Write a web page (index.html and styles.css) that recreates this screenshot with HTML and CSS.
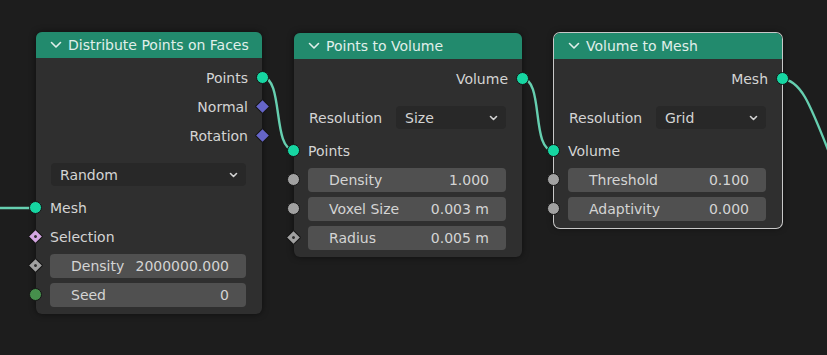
FILE: index.html
```html
<!DOCTYPE html>
<html lang="en">

<head>
    <meta charset="UTF-8">
    <meta name="viewport" content="width=device-width, initial-scale=1.0">
    <title>Geometry Nodes</title>
    <link rel="stylesheet" href="styles.css">
</head>

<body>
    <div class="canvas">
        <!-- links are drawn under the nodes -->
        <svg class="links" width="827" height="355" viewBox="0 0 827 355">
            <g class="link">
                <path d="M-10,208 L36,208" />
                <path d="M262,77 C284,77 272,150 294,150" />
                <path d="M521,78 C545,78 530,151 554,151" />
                <path d="M781,79 C803,79 812,110 838,175" />
            </g>
        </svg>

        <div class="node node-distribute">
            <div class="node-header">
                <svg class="collapse" width="12" height="8" viewBox="0 0 12 8"><polyline points="1.5,1.5 6,6 10.5,1.5" /></svg>
                <span>Distribute Points on Faces</span>
            </div>
            <div class="node-body">
                <div class="row output"><span class="label">Points</span><span class="socket geometry"></span></div>
                <div class="row output"><span class="label">Normal</span><span class="socket diamond vector"></span></div>
                <div class="row output"><span class="label">Rotation</span><span class="socket diamond vector"></span></div>
                <div class="row prop">
                    <div class="dropdown"><span>Random</span><svg class="chevron" width="9" height="6" viewBox="0 0 9 6"><polyline points="1.5,1.5 4.5,4.5 7.5,1.5" /></svg></div>
                </div>
                <div class="row input"><span class="socket geometry"></span><span class="label">Mesh</span></div>
                <div class="row input"><span class="socket diamond selection"></span><span class="label">Selection</span></div>
                <div class="row input"><span class="socket diamond float-field"></span>
                    <div class="field"><span>Density</span><span>2000000.000</span></div>
                </div>
                <div class="row input"><span class="socket integer"></span>
                    <div class="field"><span>Seed</span><span>0</span></div>
                </div>
            </div>
        </div>

        <div class="node node-points">
            <div class="node-header">
                <svg class="collapse" width="12" height="8" viewBox="0 0 12 8"><polyline points="1.5,1.5 6,6 10.5,1.5" /></svg>
                <span>Points to Volume</span>
            </div>
            <div class="node-body">
                <div class="row output"><span class="label">Volume</span><span class="socket geometry"></span></div>
                <div class="row prop">
                    <span class="prop-label">Resolution</span>
                    <div class="dropdown"><span>Size</span><svg class="chevron" width="9" height="6" viewBox="0 0 9 6"><polyline points="1.5,1.5 4.5,4.5 7.5,1.5" /></svg></div>
                </div>
                <div class="row input"><span class="socket geometry"></span><span class="label">Points</span></div>
                <div class="row input"><span class="socket float"></span>
                    <div class="field"><span>Density</span><span>1.000</span></div>
                </div>
                <div class="row input"><span class="socket float"></span>
                    <div class="field"><span>Voxel Size</span><span>0.003 m</span></div>
                </div>
                <div class="row input"><span class="socket diamond float-field"></span>
                    <div class="field"><span>Radius</span><span>0.005 m</span></div>
                </div>
            </div>
        </div>

        <div class="node node-mesh selected">
            <div class="node-header">
                <svg class="collapse" width="12" height="8" viewBox="0 0 12 8"><polyline points="1.5,1.5 6,6 10.5,1.5" /></svg>
                <span>Volume to Mesh</span>
            </div>
            <div class="node-body">
                <div class="row output"><span class="label">Mesh</span><span class="socket geometry"></span></div>
                <div class="row prop">
                    <span class="prop-label">Resolution</span>
                    <div class="dropdown"><span>Grid</span><svg class="chevron" width="9" height="6" viewBox="0 0 9 6"><polyline points="1.5,1.5 4.5,4.5 7.5,1.5" /></svg></div>
                </div>
                <div class="row input"><span class="socket geometry"></span><span class="label">Volume</span></div>
                <div class="row input"><span class="socket float"></span>
                    <div class="field"><span>Threshold</span><span>0.100</span></div>
                </div>
                <div class="row input"><span class="socket float"></span>
                    <div class="field"><span>Adaptivity</span><span>0.000</span></div>
                </div>
            </div>
        </div>
    </div>
</body>

</html>
```

FILE: styles.css
```css
body {
    margin: 0;
    background: #1d1d1d;
    font-family: "DejaVu Sans", sans-serif;
    font-size: 14px;
    color: #d4d4d4;
}

.canvas {
    position: relative;
    width: 827px;
    height: 355px;
    overflow: hidden;
}

.links {
    position: absolute;
    left: 0;
    top: 0;
}

.link path {
    fill: none;
    stroke: #66cfb0;
    stroke-width: 2.4;
}

/* nodes sit on the canvas at their own spot */
.node {
    position: absolute;
    width: 227px;
    border-radius: 6px;
    background: #2f2f2f;
    box-shadow: 0 0 6px rgba(0, 0, 0, 0.55);
}

.node-distribute { left: 36px; top: 32px; width: 226px; }
.node-points { left: 294px; top: 33px; width: 228px; }
.node-mesh { left: 554px; top: 33px; width: 228px; }

.node.selected {
    box-shadow: 0 0 0 1px #c8c8c8, 0 0 6px rgba(0, 0, 0, 0.55);
}

.node-header {
    height: 26px;
    display: flex;
    align-items: center;
    gap: 6px;
    padding-left: 14px;
    background: #228a6d;
    border-radius: 6px 6px 0 0;
    color: #e0efea;
    white-space: nowrap;
}

.collapse polyline,
.chevron polyline {
    fill: none;
    stroke: currentColor;
    stroke-width: 1.6;
    stroke-linecap: round;
    stroke-linejoin: round;
}

.node-body {
    padding: 5px 0 5px;
}

.row {
    position: relative;
    height: 29px;
    display: flex;
    align-items: center;
    padding: 0 15px 0 14px;
}

.row.output {
    justify-content: flex-end;
    padding-right: 14px;
}

.row.prop {
    margin: 10px 0 4px;
    padding-left: 15px;
    padding-right: 16px;
}

.prop-label {
    width: 87px;
    flex-shrink: 0;
}

.dropdown {
    flex: 1;
    height: 23px;
    display: flex;
    align-items: center;
    justify-content: space-between;
    padding: 0 8px 0 9px;
    background: #282828;
    border-radius: 4px;
}

.field {
    flex: 1;
    height: 24px;
    display: flex;
    align-items: center;
    justify-content: space-between;
    padding: 0 17px 0 21px;
    background: #505050;
    border-radius: 4px;
    margin-right: 1px;
}

/* sockets */
.socket {
    position: absolute;
    top: 50%;
    width: 11px;
    height: 11px;
    margin-top: -7px;
    border: 1px solid #151515;
    border-radius: 50%;
}

.output .socket { right: -7px; }
.input .socket { left: -7px; }

.socket.geometry { background: #16d6a2; }
.socket.float { background: #a1a1a1; }
.socket.integer { background: #468f4c; }

.socket.diamond {
    width: 9px;
    height: 9px;
    margin-top: -6px;
    border-radius: 1px;
    transform: rotate(45deg);
}

.output .socket.diamond { right: -6px; }
.input .socket.diamond { left: -6px; }

.socket.vector { background: #6565c8; }
.socket.selection { background: #d4a6e2; }
.socket.float-field { background: #a1a1a1; }

.socket.selection::after,
.socket.float-field::after {
    content: "";
    position: absolute;
    left: 3px;
    top: 3px;
    width: 3px;
    height: 3px;
    border-radius: 50%;
    background: #2f2f2f;
}
```
